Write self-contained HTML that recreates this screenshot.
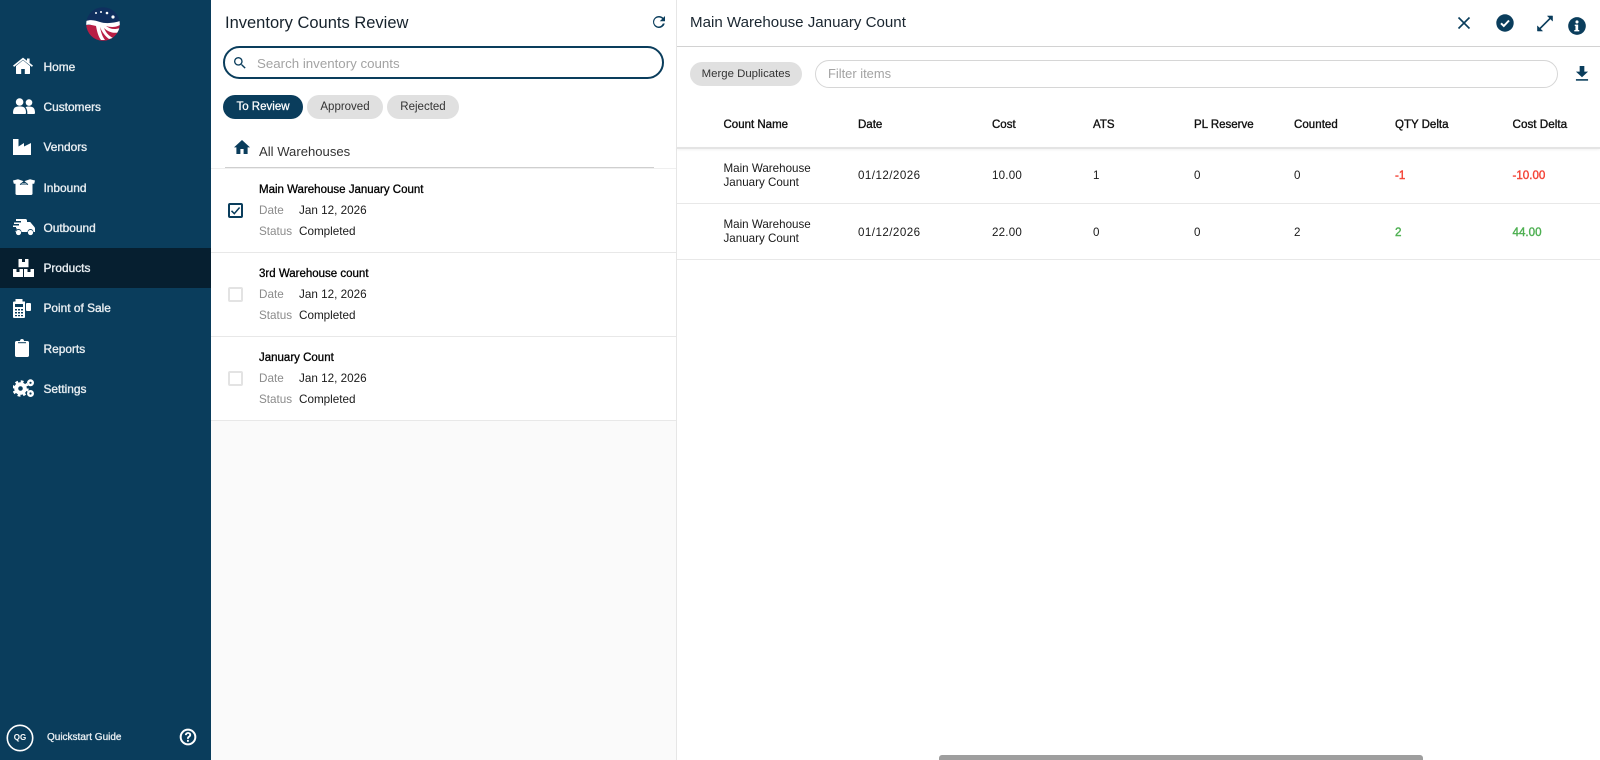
<!DOCTYPE html>
<html><head><meta charset="utf-8"><title>Inventory Counts Review</title>
<style>
*{box-sizing:border-box}
html,body{margin:0;padding:0;width:1600px;height:760px;overflow:hidden;background:#fff;font-family:"Liberation Sans",Arial,sans-serif;color:#111}
.a{position:absolute;white-space:nowrap}
.nav{position:absolute;left:43.5px;color:#e8eef2;font-size:11.9px;line-height:16px;-webkit-text-stroke:.35px #e8eef2}
svg{position:absolute;display:block}
.chip{position:absolute;top:95px;height:24px;border-radius:12px;background:#e0e0e0;color:#333;font-size:11.5px;line-height:24px;text-align:center}
.lbl{position:absolute;left:259px;font-size:11.7px;line-height:16px;color:#8b8b8b}
.val{position:absolute;left:299px;font-size:11.7px;line-height:16px;color:#1a1a1a}
.ttl{position:absolute;left:259px;font-size:11.5px;line-height:16px;color:#000;-webkit-text-stroke:.3px #000}
.cb{position:absolute;left:228px;width:15px;height:15px;border:2px solid #e3e3e3;border-radius:2px;background:#fff}
.rule{position:absolute;height:1px;background:#e8e8e8}
.th{position:absolute;top:117px;font-size:11.5px;line-height:16px;color:#111;-webkit-text-stroke:.35px #111;white-space:nowrap}
.td{position:absolute;font-size:11.6px;line-height:14px;color:#1a1a1a;white-space:nowrap}
</style></head><body>

<!-- sidebar -->
<div class="a" style="left:0;top:0;width:211px;height:760px;background:#0a3d5c"></div>
<div class="a" style="left:0;top:248px;width:211px;height:40px;background:#061f30"></div>

<svg style="left:85.500px;top:7px" width="34" height="34" viewBox="0 0 34 34">
<defs><clipPath id="lg"><circle cx="17" cy="17" r="16.8"/></clipPath></defs>
<g clip-path="url(#lg)">
<rect width="34" height="34" fill="#0f2f5e"/>
<rect y="18" width="34" height="16" fill="#b81f45"/>
<path d="M0 14 C6 12 10 14 14 15 C20 17 28 16 34 14 V18 C28 21 24 20 20 19 C24 22 28 23 34 21 V25 C28 27 22 25 18 21 C20 26 23 29 27 31 L23 32 C19 29 16 25 14 20 C15 25 16 29 19 33 L15 33 C12 29 11 24 10 19 C6 18 3 17 0 18Z" fill="#fff"/>
<circle cx="10" cy="6" r="1" fill="#fff"/><circle cx="15" cy="5" r="1" fill="#fff"/><circle cx="21" cy="6" r="1.300" fill="#fff"/><circle cx="27" cy="10" r="1.600" fill="#fff"/>
</g></svg>

<!-- home -->
<svg style="left:13px;top:57px" width="20" height="18" viewBox="0 0 20 18"><path d="M10 3.200 3 9v7.200c0 .5.300.8.800.8h4.400v-5h3.600v5h4.400c.5 0 .8-.3.800-.8V9Z" fill="#fff"/><path d="M0 8.600 10 .6l4 3.200V1.500h2.600v4.400L20 8.600l-1.100 1.300L10 2.800 1.100 9.900Z" fill="#fff"/></svg>
<div class="nav" style="top:59px">Home</div>
<!-- customers -->
<svg style="left:13px;top:98px" width="22" height="16" viewBox="0 0 22 16"><circle cx="6.600" cy="4" r="3.800" fill="#fff"/><circle cx="16" cy="4.600" r="3.300" fill="#fff"/><path d="M0 15c0-5 2-6.600 6.600-6.600s6.400 1.600 6.400 6.600c0 .6-.4 1-1 1H1c-.6 0-1-.4-1-1Z" fill="#fff"/><path d="M14.300 16c.2-3-.3-5.300-1.800-6.800 1-.5 2.100-.7 3.500-.7 4.200 0 6 1.600 6 6.500 0 .6-.4 1-1 1Z" fill="#fff"/></svg>
<div class="nav" style="top:99px">Customers</div>
<!-- vendors -->
<svg style="left:13px;top:139px" width="18" height="16" viewBox="0 0 18 16"><path d="M0 0h5.500v7.500L11 4v3.500L18 4v12H0Z" fill="#fff"/></svg>
<div class="nav" style="top:139px">Vendors</div>
<!-- inbound -->
<svg style="left:13px;top:179px" width="22" height="16" viewBox="0 0 22 16"><path d="M2.500 4.500h17v10.100c0 .8-.6 1.400-1.400 1.400H3.900c-.8 0-1.400-.6-1.400-1.400Z" fill="#fff"/><path d="M0 1.500 5 .3l5.500 1.800-2.500 2.600H.8ZM22 1.500 17 .3l-5.500 1.800 2.500 2.600h7.200Z" fill="#fff"/><path d="M7 5.500 11 2.500l4 3" fill="none" stroke="#0a3d5c" stroke-width=".8"/><path d="M7 5.500h8" stroke="#0a3d5c" stroke-width=".5"/></svg>
<div class="nav" style="top:180px">Inbound</div>
<!-- outbound -->
<svg style="left:13px;top:219px" width="22" height="17" viewBox="0 0 22 17"><path d="M3 0h9.500c.8 0 1.500.7 1.500 1.500V3h3.200L21 7.500c.6.600 1 1.300 1 2V13h-1.500a3 3 0 0 0-6 0H8.500a3 3 0 0 0-6 0H3v-2h1V9.500H3V8H0V6.500h6V5H1V3.500h7V2H3Z" fill="#fff"/><circle cx="5.500" cy="13.500" r="2.600" fill="#fff"/><circle cx="17.500" cy="13.500" r="2.600" fill="#fff"/></svg>
<div class="nav" style="top:220px">Outbound</div>
<!-- products -->
<svg style="left:13px;top:259px" width="21" height="18" viewBox="0 0 21 18"><path d="M6 0h3v3h3V0h3c.3 0 .5.200.5.500V8.300h-10V.5C5.500.2 5.700 0 6 0Z" fill="#fff"/><path d="M0 10h3.500v3h3v-3H10v8H.5a.5.500 0 0 1-.5-.5ZM11 10h3.500v3h3v-3H21v7.500c0 .3-.2.500-.5.500H11Z" fill="#fff"/></svg>
<div class="nav" style="top:260px">Products</div>
<!-- POS -->
<svg style="left:13px;top:299px" width="18" height="19" viewBox="0 0 18 19"><path d="M2.500 0h7v2.500H12V18c0 .6-.4 1-1 1H1c-.6 0-1-.4-1-1V3.500C0 3 .4 2.500 1 2.500h1.500Z" fill="#fff"/><rect x="2" y="5" width="8" height="3" fill="#0a3d5c"/><path d="M2 10h2v1.500H2ZM5 10h2v1.500H5ZM8 10h2v1.500H8ZM2 13h2v1.500H2ZM5 13h2v1.500H5ZM8 13h2v1.500H8ZM2 16h2v1.300H2ZM5 16h2v1.300H5ZM8 16h2v1.300H8Z" fill="#0a3d5c"/><rect x="13" y="4" width="5" height="8" rx="1" fill="#fff"/></svg>
<div class="nav" style="top:300px">Point of Sale</div>
<!-- reports -->
<svg style="left:15px;top:339px" width="14" height="18" viewBox="0 0 14 18"><path d="M1.500 2H5C5 .8 5.800 0 7 0s2 .8 2 2h3.500c.8 0 1.500.7 1.500 1.500v13c0 .8-.7 1.500-1.500 1.500h-11C.7 18 0 17.300 0 16.500v-13C0 2.700.7 2 1.500 2Z" fill="#fff"/><rect x="3" y="3.200" width="8" height="1" fill="#0a3d5c"/></svg>
<div class="nav" style="top:341px">Reports</div>
<!-- settings -->
<svg style="left:13px;top:379px" width="22" height="18" viewBox="0 0 22 18"><circle cx="7.500" cy="9.500" r="4.300" fill="none" stroke="#fff" stroke-width="4"/><circle cx="7.500" cy="9.500" r="7" fill="none" stroke="#fff" stroke-width="2.400" stroke-dasharray="2.800 2.700"/><circle cx="17.500" cy="3.800" r="2.300" fill="none" stroke="#fff" stroke-width="2.400"/><circle cx="17.500" cy="14.500" r="2.300" fill="none" stroke="#fff" stroke-width="2.400"/></svg>
<div class="nav" style="top:381px">Settings</div>

<!-- bottom -->
<svg style="left:6px;top:724px" width="28" height="28" viewBox="0 0 28 28"><circle cx="14" cy="14" r="12.700" fill="none" stroke="#fff" stroke-width="1.600"/></svg>
<div class="a" style="left:6px;top:731px;width:28px;text-align:center;font-size:8px;line-height:14px;font-weight:bold;color:#fff">QG</div>
<div class="a" style="left:47px;top:730px;font-size:10px;line-height:16px;color:#e8eef2;-webkit-text-stroke:.3px #e8eef2">Quickstart Guide</div>
<svg style="left:178px;top:727px" width="20" height="20" viewBox="0 0 24 24"><path d="M12 2a10 10 0 1 0 0 20 10 10 0 0 0 0-20Zm0 17.600a7.600 7.600 0 1 1 0-15.200 7.600 7.600 0 0 1 0 15.200Z" fill="#fff"/><path d="M8.300 9.800C8.400 7.500 10 6.200 12.100 6.200c2.200 0 3.700 1.400 3.700 3.200 0 1.500-.9 2.300-1.800 3-.8.600-1 .9-1 1.900h-2.200c0-1.800.5-2.500 1.500-3.300.8-.6 1.200-1 1.200-1.600 0-.8-.6-1.300-1.400-1.300-.9 0-1.500.6-1.600 1.700ZM10.800 15.500H13v2.200h-2.200Z" fill="#fff"/></svg>

<!-- left panel -->
<div class="a" style="left:211px;top:420px;width:465px;height:340px;background:#fafafa"></div>
<div class="a" style="left:676px;top:0;width:1px;height:760px;background:#e6e6e6"></div>
<div class="a" style="left:225px;top:13px;font-size:16.500px;line-height:20px;color:#16222c">Inventory Counts Review</div>
<svg style="left:650px;top:13px" width="18" height="18" viewBox="0 0 24 24"><path d="M17.650 6.350A7.958 7.958 0 0 0 12 4a8 8 0 1 0 7.730 10h-2.600A6 6 0 1 1 12 6c1.660 0 3.140.69 4.220 1.780L13 11h7V4Z" fill="#0a3d5c"/></svg>
<div class="a" style="left:223px;top:46px;width:441px;height:33px;border:2px solid #0a3d5c;border-radius:17px;background:#fff"></div>
<svg style="left:232px;top:55px" width="16" height="16" viewBox="0 0 24 24"><path d="M15.500 14h-.79l-.28-.27A6.471 6.471 0 0 0 16 9.500 6.500 6.500 0 1 0 9.500 16c1.610 0 3.090-.59 4.230-1.570l.27.28v.79l5 4.990L20.490 19ZM9.500 14a4.500 4.500 0 1 1 0-9 4.500 4.500 0 0 1 0 9Z" fill="#0a3d5c"/></svg>
<div class="a" style="left:257px;top:56px;font-size:13.300px;line-height:16px;color:#a3a3a3">Search inventory counts</div>

<div class="chip" style="left:223px;width:80px;background:#0a3d5c;color:#fff;-webkit-text-stroke:.25px #fff">To Review</div>
<div class="chip" style="left:307px;width:76px">Approved</div>
<div class="chip" style="left:387px;width:72px">Rejected</div>

<svg style="left:234px;top:140px" width="16" height="14" viewBox="2 3 20 17" preserveAspectRatio="none"><path d="M10 20v-6h4v6h5v-8h3L12 3 2 12h3v8Z" fill="#0a3d5c"/></svg>
<div class="a" style="left:259px;top:144px;font-size:13.100px;line-height:16px;color:#333">All Warehouses</div>
<div class="a" style="left:225px;top:167px;width:429px;height:1px;background:#cfcfcf"></div>
<div class="rule" style="left:211px;top:168px;width:465px;background:#efefef"></div>

<div class="ttl" style="top:182px">Main Warehouse January Count</div>
<div class="lbl" style="top:203px">Date</div><div class="val" style="top:203px">Jan 12, 2026</div>
<div class="lbl" style="top:224px">Status</div><div class="val" style="top:224px">Completed</div>
<div class="cb" style="top:203px;border-color:#0a3d5c"></div>
<svg style="left:228px;top:203px" width="15" height="15" viewBox="0 0 15 15"><path d="M3.500 7.800 6.300 10.600 11.600 4.500" fill="none" stroke="#0a3d5c" stroke-width="1.500"/></svg>
<div class="rule" style="left:211px;top:252px;width:465px"></div>

<div class="ttl" style="top:266px">3rd Warehouse count</div>
<div class="lbl" style="top:287px">Date</div><div class="val" style="top:287px">Jan 12, 2026</div>
<div class="lbl" style="top:308px">Status</div><div class="val" style="top:308px">Completed</div>
<div class="cb" style="top:287px"></div>
<div class="rule" style="left:211px;top:336px;width:465px"></div>

<div class="ttl" style="top:350px">January Count</div>
<div class="lbl" style="top:371px">Date</div><div class="val" style="top:371px">Jan 12, 2026</div>
<div class="lbl" style="top:392px">Status</div><div class="val" style="top:392px">Completed</div>
<div class="cb" style="top:371px"></div>
<div class="rule" style="left:211px;top:420px;width:465px"></div>

<!-- right header -->
<div class="a" style="left:690px;top:13px;font-size:15.100px;line-height:20px;color:#1a2630">Main Warehouse January Count</div>
<div class="a" style="left:677px;top:46px;width:923px;height:1px;background:#d2d2d2"></div>
<svg style="left:1456px;top:15px" width="16" height="16" viewBox="0 0 16 16"><path d="M2.500 2.500 13.500 13.500M13.500 2.500 2.500 13.500" stroke="#0a3d5c" stroke-width="1.600" fill="none"/></svg>
<svg style="left:1496px;top:14px" width="18" height="18" viewBox="0 0 18 18"><circle cx="9" cy="9" r="8.700" fill="#0a3d5c"/><path d="M5 9.300 7.800 12 13 6.500" fill="none" stroke="#fff" stroke-width="2"/></svg>
<svg style="left:1536px;top:15px" width="18" height="17" viewBox="0 0 18 18"><path d="M3.500 14.500 14.500 3.500" stroke="#0a3d5c" stroke-width="1.800"/><path d="M11.500 1H17V6.500ZM1 11.500V17H6.500Z" fill="#0a3d5c" stroke="#0a3d5c" stroke-width=".5"/></svg>
<svg style="left:1568px;top:17px" width="18" height="18" viewBox="0 0 20 20"><circle cx="10" cy="10" r="9.800" fill="#0a3d5c"/><circle cx="10" cy="5.500" r="1.700" fill="#fff"/><path d="M7.500 8.500h3.800v6h1.200V16H7v-1.500h1.300v-4.500H7.500Z" fill="#fff"/></svg>

<div class="a" style="left:690px;top:62px;width:112px;height:24px;border-radius:12px;background:#e0e0e0;color:#333;font-size:11.400px;line-height:24px;text-align:center">Merge Duplicates</div>
<div class="a" style="left:815px;top:60px;width:743px;height:28px;border:1.500px solid #d6d6d6;border-radius:14px;background:#fff"></div>
<div class="a" style="left:828px;top:66px;font-size:12.900px;line-height:16px;color:#a3a3a3">Filter items</div>
<svg style="left:1575px;top:66px" width="14" height="15" viewBox="0 0 15 16"><path d="M5 0h5v6h4L7.500 12 1 6h4Z" fill="#0a3d5c"/><rect x="1" y="14" width="13" height="1.700" fill="#0a3d5c"/></svg>

<!-- table -->
<div class="th" style="left:723.500px">Count Name</div>
<div class="th" style="left:858px">Date</div>
<div class="th" style="left:992px">Cost</div>
<div class="th" style="left:1093px">ATS</div>
<div class="th" style="left:1194px">PL Reserve</div>
<div class="th" style="left:1294px;letter-spacing:.05px">Counted</div>
<div class="th" style="left:1395px">QTY Delta</div>
<div class="th" style="left:1512.500px;font-size:11.700px">Cost Delta</div>
<div class="a" style="left:677px;top:147px;width:923px;height:2px;background:#e4e4e4;box-shadow:0 1px 2px rgba(0,0,0,.06)"></div>

<div class="td" style="left:723.500px;top:162px">Main Warehouse<br>January Count</div>
<div class="td" style="left:858px;top:169px;letter-spacing:.45px">01/12/2026</div>
<div class="td" style="left:992px;top:169px;letter-spacing:.2px">10.00</div>
<div class="td" style="left:1093px;top:169px">1</div>
<div class="td" style="left:1194px;top:169px">0</div>
<div class="td" style="left:1294px;top:169px">0</div>
<div class="td" style="left:1395px;top:169px;color:#f44336;-webkit-text-stroke:.4px #f44336">-1</div>
<div class="td" style="left:1512.500px;top:169px;color:#f44336;-webkit-text-stroke:.4px #f44336">-10.00</div>
<div class="rule" style="left:677px;top:203px;width:923px"></div>

<div class="td" style="left:723.500px;top:218px">Main Warehouse<br>January Count</div>
<div class="td" style="left:858px;top:226px;letter-spacing:.45px">01/12/2026</div>
<div class="td" style="left:992px;top:226px;letter-spacing:.2px">22.00</div>
<div class="td" style="left:1093px;top:226px">0</div>
<div class="td" style="left:1194px;top:226px">0</div>
<div class="td" style="left:1294px;top:226px">2</div>
<div class="td" style="left:1395px;top:226px;color:#4caf50;-webkit-text-stroke:.4px #4caf50">2</div>
<div class="td" style="left:1512.500px;top:226px;color:#4caf50;-webkit-text-stroke:.4px #4caf50">44.00</div>
<div class="rule" style="left:677px;top:259px;width:923px"></div>

<div class="a" style="left:939px;top:755px;width:484px;height:5px;background:#9e9e9e;border-radius:3px 3px 0 0"></div>
</body></html>
